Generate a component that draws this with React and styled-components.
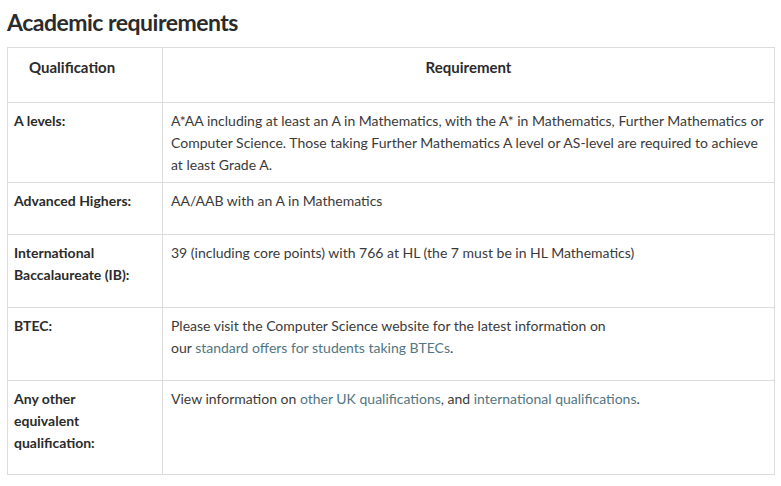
import React from "react";
import styled, { createGlobalStyle } from "styled-components";

const Global = createGlobalStyle`
  html, body { margin: 0; padding: 0; background: #fff; }
  body { font-family: Lato, "Liberation Sans", sans-serif; color: #333; }
`;

const Page = styled.div`
  padding: 6px 7px 0 7px;
  width: 767px;
`;

const Title = styled.h2`
  margin: 0 0 9px 0;
  font-size: 23px;
  line-height: 32px;
  font-weight: 700;
  color: #2b2b2b;
  letter-spacing: -0.5px;
`;

const Table = styled.table`
  border-collapse: collapse;
  width: 767px;
  table-layout: fixed;
  font-size: 14px;
  line-height: 22px;
`;

const HeadCell = styled.th`
  border: 1px solid #dcdcdc;
  padding: 8px 8px 24px ${(p) => p.$padLeft || 8}px;
  text-align: ${(p) => p.$align || "left"};
  font-weight: 700;
  font-size: 15px;
  color: #2b2b2b;
  vertical-align: top;
`;

const Row = styled.tr`
  height: ${(p) => p.$h}px;
`;

const Label = styled.td`
  border: 1px solid #dcdcdc;
  padding: 7px 8px 0 6px;
  vertical-align: top;
  font-weight: 700;
  color: #2b2b2b;
`;

const Value = styled.td`
  border: 1px solid #dcdcdc;
  padding: 7px 8px 0 8px;
  vertical-align: top;
  color: #3a3a3a;
`;

const Link = styled.a`
  color: #527682;
  text-decoration: none;
`;

export default function App() {
  return (
    <Page>
      <Global />
      <Title>Academic requirements</Title>
      <Table>
        <colgroup>
          <col style={{ width: "155px" }} />
          <col style={{ width: "612px" }} />
        </colgroup>
        <thead>
          <tr>
            <HeadCell $padLeft={21}>Qualification</HeadCell>
            <HeadCell $align="center">Requirement</HeadCell>
          </tr>
        </thead>
        <tbody>
          <Row $h={80}>
            <Label>A levels:</Label>
            <Value>
              A*AA including at least an A in Mathematics, with the A* in Mathematics, Further Mathematics or
              Computer Science. Those taking Further Mathematics A level or AS-level are required to achieve
              at least Grade A.
            </Value>
          </Row>
          <Row $h={52}>
            <Label>Advanced Highers:</Label>
            <Value>AA/AAB with an A in Mathematics</Value>
          </Row>
          <Row $h={73}>
            <Label>
              International
              <br />
              Baccalaureate (IB):
            </Label>
            <Value>39 (including core points) with 766 at HL (the 7 must be in HL Mathematics)</Value>
          </Row>
          <Row $h={73}>
            <Label>BTEC:</Label>
            <Value>
              Please visit the Computer Science website for the latest information on
              <br />
              our <Link href="#">standard offers for students taking BTECs</Link>.
            </Value>
          </Row>
          <Row $h={94}>
            <Label>
              Any other
              <br />
              equivalent
              <br />
              qualification:
            </Label>
            <Value>
              View information on <Link href="#">other UK qualifications</Link>, and{" "}
              <Link href="#">international qualifications</Link>.
            </Value>
          </Row>
        </tbody>
      </Table>
    </Page>
  );
}
